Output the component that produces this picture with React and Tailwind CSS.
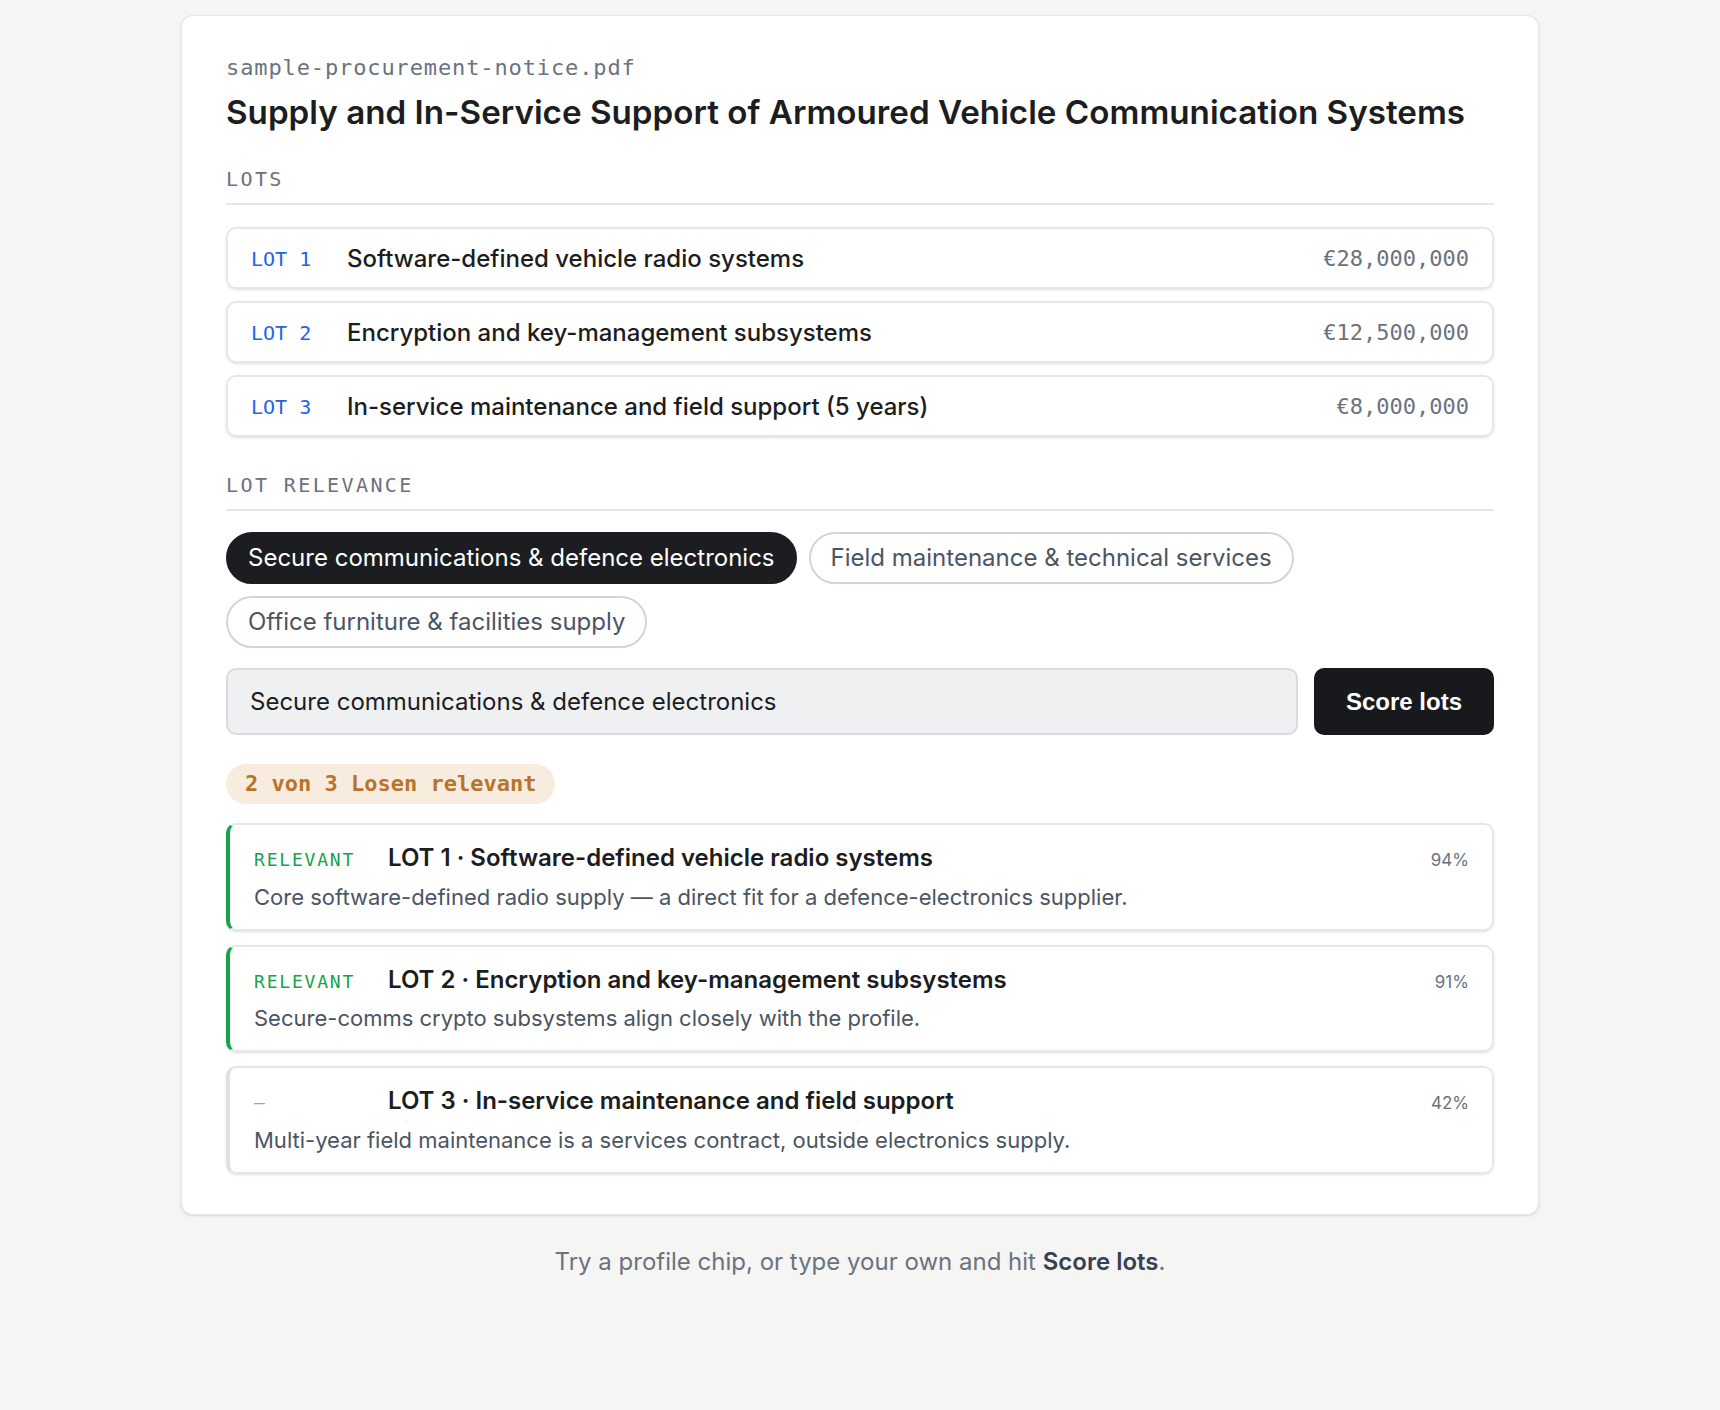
import React, { useState } from 'react';

const lots = [
  { id: 1, title: 'Software-defined vehicle radio systems', value: '€28,000,000' },
  { id: 2, title: 'Encryption and key-management subsystems', value: '€12,500,000' },
  { id: 3, title: 'In-service maintenance and field support (5 years)', value: '€8,000,000' },
];

const profiles = [
  'Secure communications & defence electronics',
  'Field maintenance & technical services',
  'Office furniture & facilities supply',
];

const results = [
  {
    id: 1,
    relevant: true,
    title: 'LOT 1 · Software-defined vehicle radio systems',
    note: 'Core software-defined radio supply — a direct fit for a defence-electronics supplier.',
    score: 94,
  },
  {
    id: 2,
    relevant: true,
    title: 'LOT 2 · Encryption and key-management subsystems',
    note: 'Secure-comms crypto subsystems align closely with the profile.',
    score: 91,
  },
  {
    id: 3,
    relevant: false,
    title: 'LOT 3 · In-service maintenance and field support',
    note: 'Multi-year field maintenance is a services contract, outside electronics supply.',
    score: 42,
  },
];

const mono = "font-['DejaVu_Sans_Mono',monospace]";

const SectionHeading = ({ children }) => (
  <div className={`${mono} text-[20px] leading-[24px] tracking-[0.12em] text-[#6b7280] pb-[12px] border-b-2 border-[#e5e7eb]`}>
    {children}
  </div>
);

const App = () => {
  const [active, setActive] = useState(profiles[0]);
  const [query, setQuery] = useState(profiles[0]);

  return (
    <div className="min-h-screen bg-[#f5f5f4] pt-[15px] pb-10 font-['Inter',sans-serif]">
      <div className="w-[1358px] mx-auto bg-white border border-[#e5e7eb] rounded-xl shadow-sm px-[44px] pt-[38px] pb-[40px]">
        <div className={`${mono} text-[22px] leading-[28px] tracking-[0.04em] text-[#6b7280]`}>
          sample-procurement-notice.pdf
        </div>
        <h1 className="mt-[10px] text-[33.2px] leading-[40px] font-semibold text-[#1c1d21]">
          Supply and In-Service Support of Armoured Vehicle Communication Systems
        </h1>

        <div className="mt-[35px]">
          <SectionHeading>LOTS</SectionHeading>
        </div>

        <div className="mt-[22px] flex flex-col gap-3">
          {lots.map(lot => (
            <div
              key={lot.id}
              className="flex items-center border-2 border-[#e5e7eb] rounded-[10px] px-[23px] pt-[14px] pb-[12px] shadow-sm"
            >
              <span className={`${mono} text-[20px] leading-[32px] text-[#2563eb] w-[96px] shrink-0`}>
                LOT {lot.id}
              </span>
              <span className="flex-1 text-[24px] leading-[32px] font-medium text-[#1c1d21]">{lot.title}</span>
              <span className={`${mono} text-[22px] leading-[32px] text-[#6b7280]`}>{lot.value}</span>
            </div>
          ))}
        </div>

        <div className="mt-[36px]">
          <SectionHeading>LOT RELEVANCE</SectionHeading>
        </div>

        <div className="mt-[21px] flex flex-wrap gap-3">
          {profiles.map(p => (
            <button
              key={p}
              onClick={() => { setActive(p); setQuery(p); }}
              className={
                p === active
                  ? 'h-[52px] px-[20px] rounded-full border-2 border-[#1c1d21] bg-[#1c1d21] text-white text-[24px]'
                  : 'h-[52px] px-[20px] rounded-full border-2 border-[#d1d5db] bg-white text-[#4b5563] text-[24px]'
              }
            >
              {p}
            </button>
          ))}
        </div>

        <div className="mt-[20px] flex gap-4">
          <input
            value={query}
            onChange={e => setQuery(e.target.value)}
            className="flex-1 h-[67px] px-[22px] bg-[#eff0f2] border-2 border-[#d9dbe0] rounded-[10px] text-[24px] text-[#1c1d21] outline-none"
          />
          <button className="w-[180px] h-[67px] rounded-[10px] bg-[#18191d] text-white text-[24px] font-bold font-['Liberation_Sans',Arial,sans-serif]">
            Score lots
          </button>
        </div>

        <div className="mt-[29px]">
          <span className={`${mono} inline-block h-[40px] leading-[40px] px-[19px] rounded-full bg-[#f8ecde] text-[#b7742a] text-[22px] font-bold`}>
            2 von 3 Losen relevant
          </span>
        </div>

        <div className="mt-[19px] flex flex-col gap-[14px]">
          {results.map(r => (
            <div
              key={r.id}
              className={
                r.relevant
                  ? 'border-2 border-[#e5e7eb] border-l-4 border-l-[#16a34a] rounded-[10px] pl-[24px] pr-[23px] pt-[18px] pb-[17px] shadow-sm'
                  : 'border-2 border-[#e5e7eb] border-l-4 border-l-[#dfe1e6] rounded-[10px] pl-[24px] pr-[23px] pt-[18px] pb-[17px] shadow-sm'
              }
            >
              <div className="flex items-baseline">
                <span
                  className={
                    r.relevant
                      ? `${mono} w-[134px] shrink-0 text-[18px] tracking-[0.1em] text-[#16a34a]`
                      : `${mono} w-[134px] shrink-0 text-[18px] text-[#9ca3af]`
                  }
                >
                  {r.relevant ? 'RELEVANT' : '–'}
                </span>
                <span className="flex-1 text-[24px] leading-[30px] font-semibold text-[#1c1d21]">{r.title}</span>
                <span className="text-[17px] text-[#6b7280]">{r.score}%</span>
              </div>
              <p className="mt-[8px] text-[22px] leading-[30px] text-[#4b5563]">{r.note}</p>
            </div>
          ))}
        </div>
      </div>

      <p className="mt-[31px] text-center text-[24px] leading-[32px] text-[#6b7280]">
        Try a profile chip, or type your own and hit <span className="font-semibold text-[#374151]">Score lots</span>.
      </p>
    </div>
  );
};

export default App;
